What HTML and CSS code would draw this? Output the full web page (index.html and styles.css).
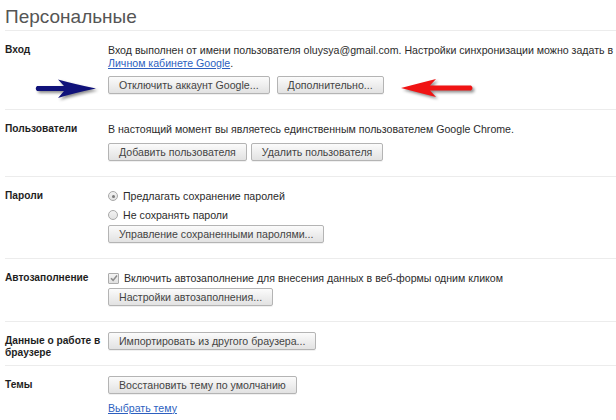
FILE: index.html
```html
<!DOCTYPE html>
<html lang="ru">
<head>
<meta charset="utf-8">
<title>Персональные</title>
<link rel="stylesheet" href="styles.css">
</head>
<body>
<div class="page">
  <h1 class="title">Персональные</h1>

  <section class="sec sec-signin">
    <div class="label">Вход</div>
    <div class="content">
      <p class="text">Вход выполнен от имени пользователя oluysya@gmail.com. Настройки синхронизации можно задать в<br><a class="link" href="#">Личном кабинете Google</a>.</p>
      <div class="buttons buttons-wide">
        <button class="btn">Отключить аккаунт Google...</button>
        <button class="btn">Дополнительно...</button>
      </div>
    </div>
    <svg class="arrow arrow-blue" width="72" height="30" viewBox="0 0 72 30">
      <path d="M7,11 L34,11 L28,4.5 Q44,9 66,13.5 Q44,18 28,23 L34,16 L7,16 Q4.5,13.5 7,11 Z" fill="#10127a"/>
    </svg>
    <svg class="arrow arrow-red" width="84" height="30" viewBox="0 0 84 30">
      <path d="M5,15 Q24,10 40,6 L34,12.5 L75,12.5 Q78,15 75,17.5 L34,17.5 L40,24 Q24,20 5,15 Z" fill="#f01414"/>
    </svg>
  </section>

  <section class="sec">
    <div class="label">Пользователи</div>
    <div class="content">
      <p class="text">В настоящий момент вы являетесь единственным пользователем Google Chrome.</p>
      <div class="buttons">
        <button class="btn">Добавить пользователя</button>
        <button class="btn">Удалить пользователя</button>
      </div>
    </div>
  </section>

  <section class="sec">
    <div class="label">Пароли</div>
    <div class="content">
      <div class="opt"><span class="radio radio-on"></span>Предлагать сохранение паролей</div>
      <div class="opt"><span class="radio"></span>Не сохранять пароли</div>
      <button class="btn">Управление сохраненными паролями...</button>
    </div>
  </section>

  <section class="sec">
    <div class="label">Автозаполнение</div>
    <div class="content">
      <div class="opt"><span class="check"><svg width="8" height="8" viewBox="0 0 8 8"><path d="M1,4.3 L3.1,6.4 L7,1.6" fill="none" stroke="#8c8c8c" stroke-width="1.6"/></svg></span>Включить автозаполнение для внесения данных в веб-формы одним кликом</div>
      <button class="btn">Настройки автозаполнения...</button>
    </div>
  </section>

  <section class="sec">
    <div class="label">Данные о работе в браузере</div>
    <div class="content">
      <button class="btn">Импортировать из другого браузера...</button>
    </div>
  </section>

  <section class="sec sec-last">
    <div class="label">Темы</div>
    <div class="content">
      <button class="btn">Восстановить тему по умолчанию</button>
      <a class="link link-block" href="#">Выбрать тему</a>
    </div>
  </section>
</div>
</body>
</html>
```
FILE: styles.css
```css
html, body {
  margin: 0;
  padding: 0;
  background: #ffffff;
  overflow: hidden;
}

body {
  font-family: "Liberation Sans", Arial, sans-serif;
  font-size: 10.6px;
  color: #2b2b2b;
}

.page {
  padding-left: 5px;
}

.title {
  margin: 0;
  padding-top: 6px;
  height: 24px;
  font-size: 19px;
  line-height: 22px;
  font-weight: normal;
  color: #555555;
}

.sec {
  position: relative;
  display: flex;
  border-top: 1px solid #ececec;
  padding: 10px 0 6px;
}

.label {
  width: 103px;
  flex: none;
  padding-top: 3px;
  line-height: 12px;
  font-size: 10.2px;
  font-weight: bold;
  color: #1e1e1e;
}

.content {
  flex: 1;
  min-width: 0;
  padding-bottom: 9px;
  display: flex;
  flex-direction: column;
  align-items: flex-start;
}

.text {
  margin: 0;
  padding-top: 3px;
  line-height: 12.5px;
  white-space: nowrap;
}

.link {
  color: #2d5fbf;
  text-decoration: underline;
}

.link-block {
  display: block;
  margin-top: 7px;
  line-height: 14px;
}

.buttons {
  display: flex;
  gap: 4px;
  margin-top: 7px;
}

.buttons-wide {
  gap: 7px;
}

.btn {
  height: 18px;
  box-sizing: border-box;
  padding: 0 10px;
  border: 1px solid #b4b4b4;
  border-radius: 2px;
  background: linear-gradient(#fbfbfb, #ececec 60%, #e2e2e2);
  box-shadow: 0 1px 0 rgba(0, 0, 0, 0.06);
  font-family: inherit;
  font-size: 10.6px;
  line-height: 16px;
  color: #444444;
  white-space: nowrap;
}

.opt {
  display: flex;
  align-items: center;
  height: 19px;
  white-space: nowrap;
}

.radio {
  width: 8px;
  height: 8px;
  border: 1px solid #a8a8a8;
  border-radius: 50%;
  background: linear-gradient(#f2f2f2, #e2e2e2);
  margin-right: 5px;
  position: relative;
  flex: none;
}

.radio-on::after {
  content: "";
  position: absolute;
  left: 2.5px;
  top: 2.5px;
  width: 3px;
  height: 3px;
  border-radius: 50%;
  background: #7a7a7a;
}

.check {
  width: 9px;
  height: 9px;
  border: 1px solid #acacac;
  border-radius: 1px;
  background: linear-gradient(#f4f4f4, #e0e0e0);
  margin-right: 5px;
  display: flex;
  align-items: center;
  justify-content: center;
  flex: none;
}

.arrow {
  position: absolute;
  filter: drop-shadow(2px 2px 1.5px rgba(0, 0, 0, 0.45));
}

.arrow-blue {
  left: 25px;
  top: 44px;
}

.arrow-red {
  left: 391px;
  top: 42px;
}
```
